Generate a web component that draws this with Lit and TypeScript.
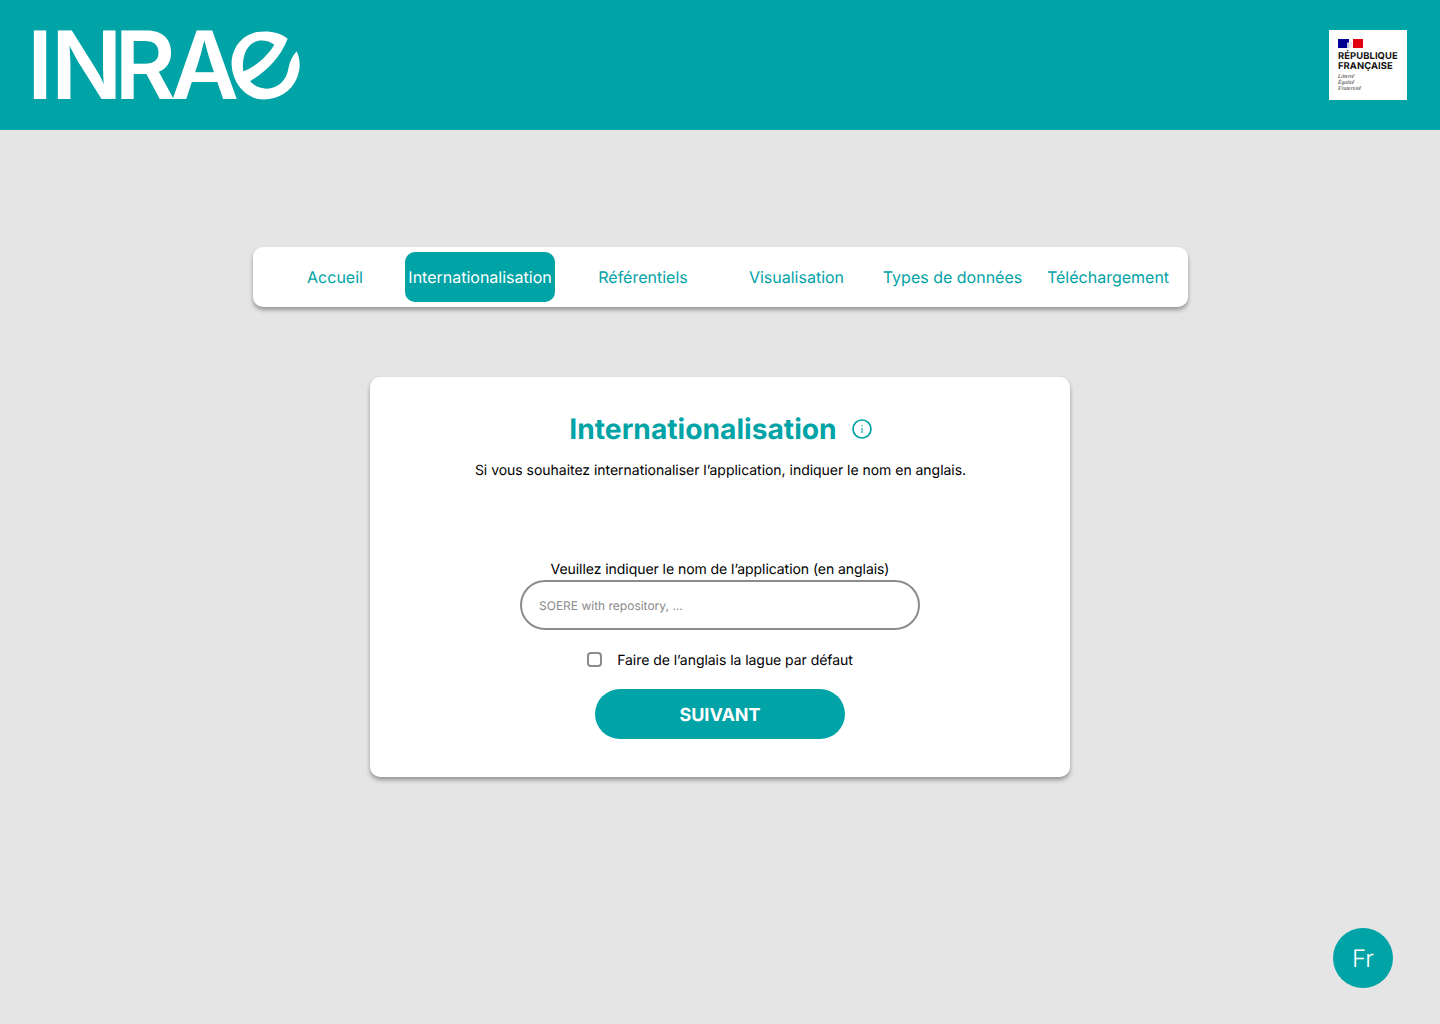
import { LitElement, html, css } from "lit";
import { customElement } from "lit/decorators.js";

@customElement("app-root")
export class AppRoot extends LitElement {
  static styles = css`
    :host {
      display: flex;
      flex-direction: column;
      align-items: stretch;
      min-height: 1024px;
      background: #e5e5e5;
      font-family: Inter, "Liberation Sans", sans-serif;
      text-rendering: geometricPrecision;
      position: relative;
      color: #000;
    }
    header {
      height: 130px;
      background: #00a3a6;
      display: flex;
      align-items: center;
      justify-content: space-between;
      padding: 0 33px 0 34px;
      flex: none;
    }
    .logo { display: flex; align-items: center; height: 70px; position: relative; width: 270px; }
    .wordmark { font: 600 94px/70px Inter, sans-serif; color: #fff; letter-spacing: -5.3px; margin-left: -7px; }
    .wordmark .i { letter-spacing: -2px; }
    .wordmark .n { letter-spacing: -8px; }
    .e { position: absolute; left: 181px; top: -8px; display: block; }
    .rf {
      width: 78px; height: 70px; background: #fff; box-sizing: border-box;
      padding: 9px 0 0 9px; display: flex; flex-direction: column;
    }
    .flag { display: block; }
    .rf-name { font: 700 9.4px/9.5px Inter, sans-serif; color: #111; margin-top: 4px; letter-spacing: 0.1px; }
    .rf-motto { font: italic 400 5.6px/6px "Liberation Serif", serif; color: #222; margin-top: 3px; }
    nav {
      margin: 117px 0 0 253px;
      width: 935px;
      height: 60px;
      box-sizing: border-box;
      background: #fff;
      border-radius: 10px;
      box-shadow: 0 3px 4px rgba(0,0,0,.35);
      padding: 5px 15px 5px 12px;
      display: grid;
      grid-template-columns: 140px 150px 176px 131px 181px 130px;
    }
    nav a {
      display: flex; align-items: center; justify-content: center;
      color: #00a3a6; font-size: 16px; white-space: nowrap; border-radius: 10px;
    }
    nav a.active { background: #00a3a6; color: #fff; }
    .card {
      margin: 70px 0 0 370px;
      width: 700px;
      height: 400px;
      box-sizing: border-box;
      background: #fff;
      border-radius: 10px;
      box-shadow: 0 3px 4px rgba(0,0,0,.35);
      padding-top: 33px;
      display: flex;
      flex-direction: column;
      align-items: center;
    }
    .title { display: flex; align-items: center; gap: 15px; height: 38px; margin: 0; padding-left: 1px; }
    h1 { margin: 0; font-size: 28.2px; font-weight: 700; color: #00a3a6; line-height: 38px; }
    .info { display: block; }
    .sub { margin: 14px 0 0; font-size: 14px; line-height: 17px; letter-spacing: -0.03px; padding-left: 1px; }
    .label { margin: 82px 0 0; font-size: 14px; line-height: 17px; letter-spacing: -0.055px; }
    .input {
      margin-top: 2px; width: 400px; height: 50px; box-sizing: border-box;
      border: 2px solid #8c8c8c; border-radius: 25px; padding: 0 17px;
      font-size: 12px; color: #8a8a8a; display: flex; align-items: center;
    }
    .check { margin: 22px 0 0 0; display: flex; align-items: flex-start; gap: 15px; font-size: 14px; line-height: 17px; height: 17px; letter-spacing: -0.05px; }
    .box { width: 15px; height: 15px; box-sizing: border-box; border: 2px solid #8c8c8c; border-radius: 4px; }
    .btn {
      margin-top: 20px; width: 250px; height: 50px; box-sizing: border-box; padding-top: 2px; border-radius: 25px; background: #00a3a6;
      color: #fff; font-size: 18px; font-weight: 700; display: flex; align-items: center; justify-content: center;
    }
    .fab {
      position: absolute; left: 1333px; top: 928px; width: 60px; height: 60px; border-radius: 50%;
      background: #00a3a6; color: #fff; font-size: 24px; font-weight: 300; display: flex; align-items: center; justify-content: center;
    }
  `;

  render() {
    return html`
      <header>
        <div class="logo">
          <span class="wordmark"><span class="i">I</span><span class="n">N</span>RA</span>
          <svg class="e" width="95" height="85" viewBox="0 0 285 255" fill="#fff" fill-rule="evenodd">
            <path d="M218 50C195 30 160 25 125 30C85 38 55 70 50 115C47 165 75 215 125 230C175 240 225 215 245 170C258 140 256 110 245 88C232 102 224 118 220 140C214 175 190 198 155 200C135 200 118 192 105 178C150 150 195 110 218 50ZM178 68C160 55 130 50 110 65C90 80 80 115 85 148C120 135 155 105 178 68Z"/>
          </svg>
        </div>
        <div class="rf">
          <svg class="flag" width="25" height="9" viewBox="0 0 25 9">
            <rect width="11" height="9" fill="#000091"/>
            <rect x="15" width="10" height="9" fill="#e1000f"/>
            <path d="M9 4L11 3L11 9L9 9Z" fill="#c8c8e0"/>
            <path d="M11 3L14 2L15 8L11 9Z" fill="#e8e8ee"/>
          </svg>
          <div class="rf-name">RÉPUBLIQUE<br />FRANÇAISE</div>
          <div class="rf-motto">Liberté<br />Égalité<br />Fraternité</div>
        </div>
      </header>
      <nav>
        <a>Accueil</a>
        <a class="active">Internationalisation</a>
        <a>Référentiels</a>
        <a>Visualisation</a>
        <a>Types de données</a>
        <a>Téléchargement</a>
      </nav>
      <section class="card">
        <div class="title">
          <h1>Internationalisation</h1>
          <svg class="info" width="20" height="20" viewBox="0 0 20 20" fill="none" stroke="#00a3a6" stroke-width="1.7">
            <circle cx="10" cy="10" r="9"/>
            <path d="M10 9v5" stroke-width="1.1"/>
            <path d="M10 6v1.2" stroke-width="1.1"/>
          </svg>
        </div>
        <p class="sub">Si vous souhaitez internationaliser l’application, indiquer le nom en anglais.</p>
        <div class="label">Veuillez indiquer le nom de l’application (en anglais)</div>
        <div class="input">SOERE with repository, ...</div>
        <div class="check"><span class="box"></span><span>Faire de l’anglais la lague par défaut</span></div>
        <div class="btn">SUIVANT</div>
      </section>
      <div class="fab">Fr</div>
    `;
  }
}
